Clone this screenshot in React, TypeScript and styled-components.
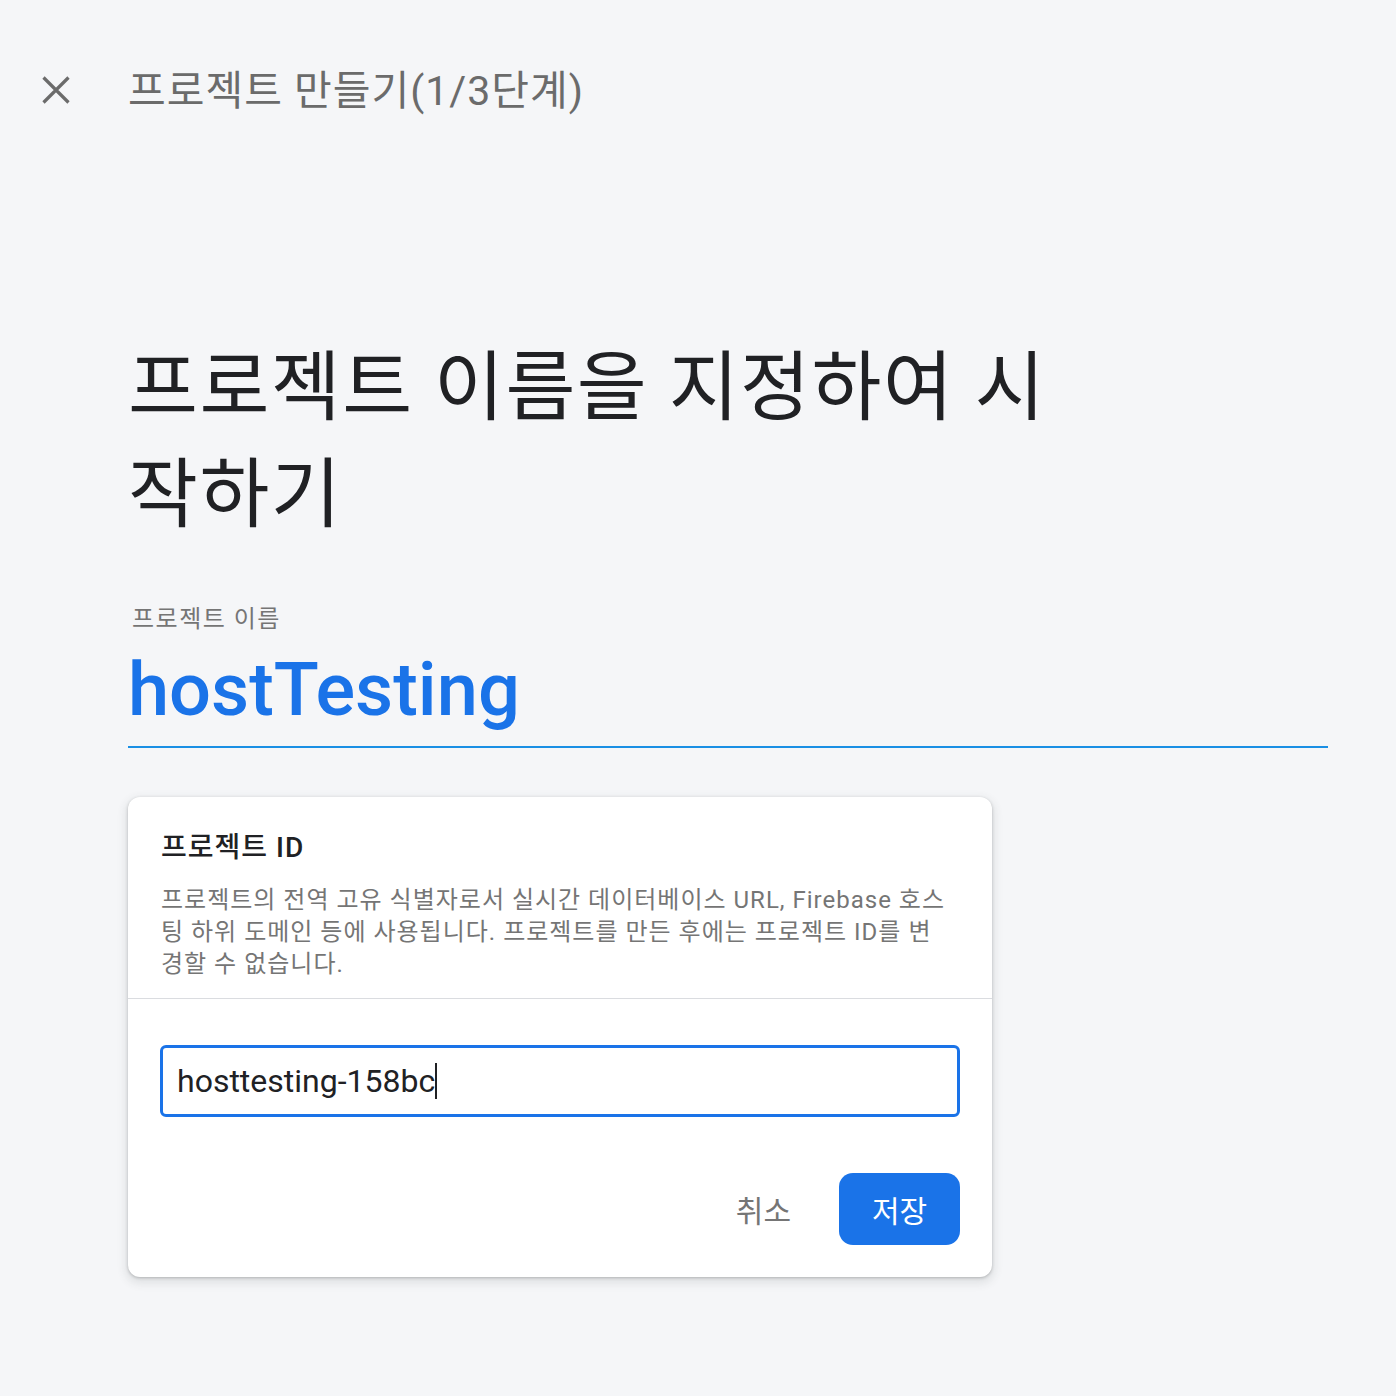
import React from 'react';
import styled, { createGlobalStyle } from 'styled-components';

const GlobalStyle = createGlobalStyle`
  html, body {
    margin: 0;
    padding: 0;
    background: #f5f6f8;
    font-family: Roboto, 'Noto Sans CJK KR', sans-serif;
  }
`;

const CloseIcon: React.FC = () => (
  <svg width="28" height="28" viewBox="0 0 28 28" fill="none">
    <path d="M1.5 1.5L26.5 26.5M26.5 1.5L1.5 26.5" stroke="#6b6b6b" strokeWidth="3.2" />
  </svg>
);

export default function App() {
  return (
    <>
      <GlobalStyle />
      <Page>
        <TopBar>
          <CloseButton aria-label="close">
            <CloseIcon />
          </CloseButton>
          <TopTitle>프로젝트 만들기(1/3단계)</TopTitle>
        </TopBar>

        <Content>
          <Heading>프로젝트 이름을 지정하여 시작하기</Heading>

          <FieldLabel>프로젝트 이름</FieldLabel>
          <NameField>hostTesting</NameField>

          <Card>
            <CardHead>
              <CardTitle>프로젝트 ID</CardTitle>
              <CardText>
                프로젝트의 전역 고유 식별자로서 실시간 데이터베이스 URL, Firebase 호스팅 하위 도메인 등에 사용됩니다. 프로젝트를 만든 후에는 프로젝트 ID를 변경할 수 없습니다.
              </CardText>
            </CardHead>
            <CardBody>
              <IdInput>
                hosttesting-158bc<Caret />
              </IdInput>
              <Actions>
                <TextButton>취소</TextButton>
                <PrimaryButton>저장</PrimaryButton>
              </Actions>
            </CardBody>
          </Card>
        </Content>
      </Page>
    </>
  );
}

const Page = styled.div`
  min-height: 1396px;
  background: #f5f6f8;
`;

const TopBar = styled.header`
  height: 180px;
  display: flex;
  align-items: center;
  padding-left: 41px;
`;

const CloseButton = styled.button`
  width: 30px;
  height: 30px;
  padding: 0;
  border: 0;
  background: none;
  display: flex;
  align-items: center;
  justify-content: center;
  margin-right: 57px;
  cursor: pointer;
`;

const TopTitle = styled.h2`
  margin: 0 0 6px;
  font-size: 41px;
  font-weight: 400;
  color: #6b6b6b;
  letter-spacing: 1px;
`;

const Content = styled.main`
  padding: 155px 0 0 128px;
`;

const Heading = styled.h1`
  margin: 0;
  width: 960px;
  font-size: 76px;
  line-height: 107px;
  font-weight: 400;
  letter-spacing: 1.5px;
  color: #202124;
`;

const FieldLabel = styled.div`
  margin-top: 55px;
  padding-left: 4px;
  font-size: 24px;
  line-height: 30px;
  letter-spacing: 1.5px;
  color: #757575;
`;

const NameField = styled.div`
  margin-top: 16px;
  width: 1200px;
  font-size: 74px;
  line-height: 80px;
  font-weight: 500;
  color: #1a73e8;
  padding-bottom: 16px;
  border-bottom: 2px solid #1a8fe4;
`;

const Card = styled.section`
  margin-top: 49px;
  width: 864px;
  background: #ffffff;
  border-radius: 12px;
  box-shadow: 0 1px 3px rgba(60, 64, 67, 0.3), 0 4px 8px 3px rgba(60, 64, 67, 0.1);
  overflow: hidden;
`;

const CardHead = styled.div`
  padding: 34px 45px 18px 33px;
  border-bottom: 1px solid #dadce0;
`;

const CardTitle = styled.h3`
  margin: 0;
  font-size: 28px;
  line-height: 34px;
  font-weight: 500;
  letter-spacing: 1px;
  color: #202124;
`;

const CardText = styled.p`
  margin: 19px 0 0;
  font-size: 24px;
  line-height: 32px;
  letter-spacing: 1px;
  color: #757575;
`;

const CardBody = styled.div`
  padding: 46px 32px 32px;
`;

const IdInput = styled.div`
  height: 72px;
  box-sizing: border-box;
  border: 3px solid #1a73e8;
  border-radius: 6px;
  padding: 0 14px;
  display: flex;
  align-items: center;
  font-size: 32px;
  color: #202124;
`;

const Caret = styled.span`
  display: inline-block;
  width: 2px;
  height: 36px;
  background: #202124;
`;

const Actions = styled.div`
  margin-top: 56px;
  display: flex;
  justify-content: flex-end;
  align-items: center;
  gap: 24px;
`;

const TextButton = styled.button`
  border: 0;
  background: none;
  padding: 0 24px;
  height: 72px;
  font-family: Roboto, 'Noto Sans CJK KR', sans-serif;
  font-size: 30px;
  color: #757575;
  cursor: pointer;
`;

const PrimaryButton = styled.button`
  width: 121px;
  height: 72px;
  border: 0;
  border-radius: 14px;
  background: #1a73e8;
  color: #ffffff;
  font-family: Roboto, 'Noto Sans CJK KR', sans-serif;
  font-size: 30px;
  cursor: pointer;
`;
